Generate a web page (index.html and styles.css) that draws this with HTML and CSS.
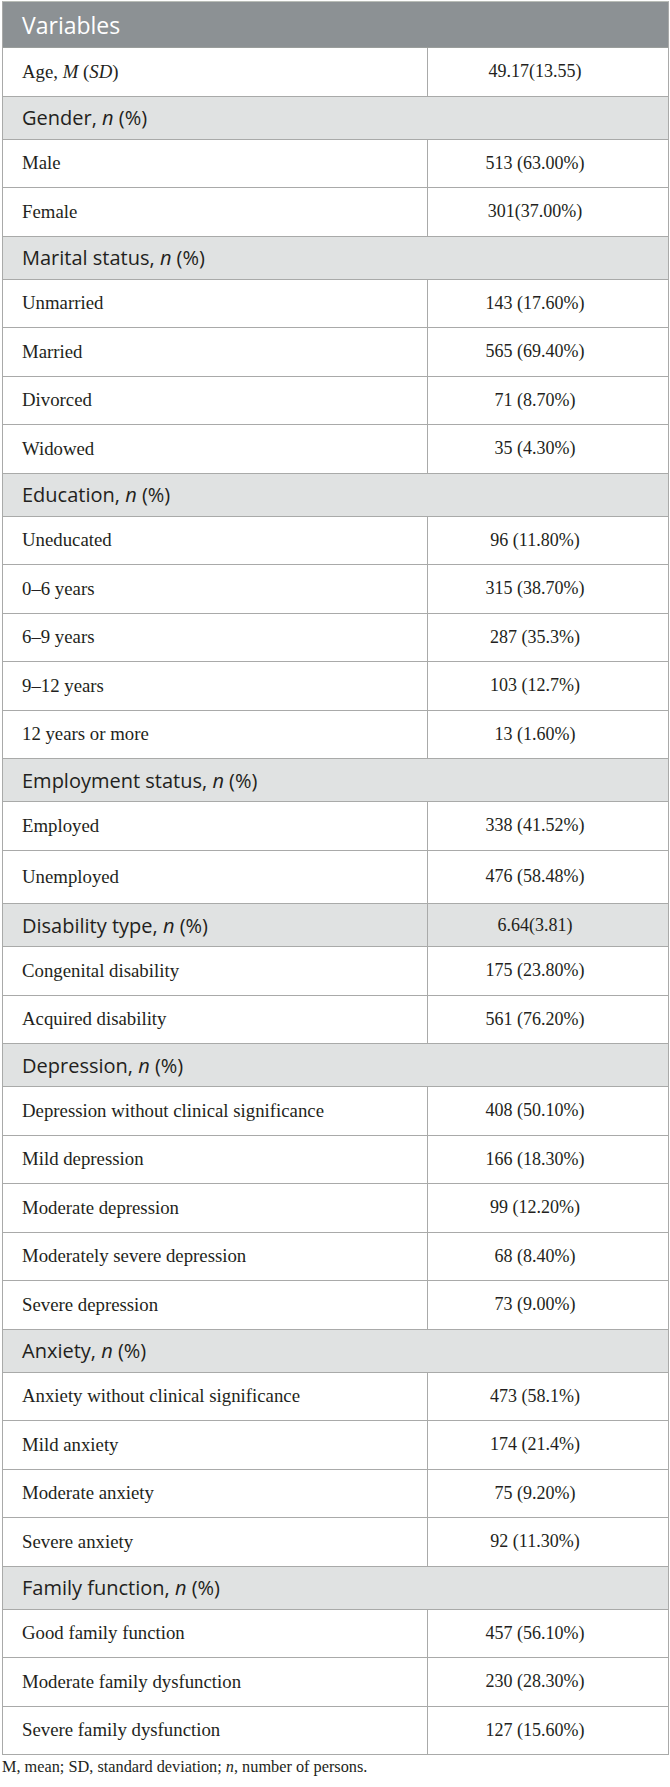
FILE: index.html
```html
<!DOCTYPE html>
<html lang="en">
<head>
<meta charset="utf-8">
<title>Variables</title>
<link rel="stylesheet" href="styles.css">
</head>
<body>
<div class="page">
  <div class="tbl" role="table">
    <div class="head" role="row"><div class="hcell" role="columnheader"><span>Variables</span></div></div>
    <div class="row" role="row"><div class="lab" role="cell"><span>Age, <i>M</i> (<i>SD</i>)</span></div><div class="val" role="cell"><span>49.17(13.55)</span></div></div>
    <div class="sec" role="row"><div class="slab" role="cell"><span>Gender, <i>n</i> (%)</span></div></div>
    <div class="row" role="row"><div class="lab" role="cell"><span>Male</span></div><div class="val" role="cell"><span>513 (63.00%)</span></div></div>
    <div class="row" role="row"><div class="lab" role="cell"><span>Female</span></div><div class="val" role="cell"><span>301(37.00%)</span></div></div>
    <div class="sec" role="row"><div class="slab" role="cell"><span>Marital status, <i>n</i> (%)</span></div></div>
    <div class="row" role="row"><div class="lab" role="cell"><span>Unmarried</span></div><div class="val" role="cell"><span>143 (17.60%)</span></div></div>
    <div class="row" role="row"><div class="lab" role="cell"><span>Married</span></div><div class="val" role="cell"><span>565 (69.40%)</span></div></div>
    <div class="row" role="row"><div class="lab" role="cell"><span>Divorced</span></div><div class="val" role="cell"><span>71 (8.70%)</span></div></div>
    <div class="row" role="row"><div class="lab" role="cell"><span>Widowed</span></div><div class="val" role="cell"><span>35 (4.30%)</span></div></div>
    <div class="sec" role="row"><div class="slab" role="cell"><span>Education, <i>n</i> (%)</span></div></div>
    <div class="row" role="row"><div class="lab" role="cell"><span>Uneducated</span></div><div class="val" role="cell"><span>96 (11.80%)</span></div></div>
    <div class="row" role="row"><div class="lab" role="cell"><span>0–6 years</span></div><div class="val" role="cell"><span>315 (38.70%)</span></div></div>
    <div class="row" role="row"><div class="lab" role="cell"><span>6–9 years</span></div><div class="val" role="cell"><span>287 (35.3%)</span></div></div>
    <div class="row" role="row"><div class="lab" role="cell"><span>9–12 years</span></div><div class="val" role="cell"><span>103 (12.7%)</span></div></div>
    <div class="row" role="row"><div class="lab" role="cell"><span>12 years or more</span></div><div class="val" role="cell"><span>13 (1.60%)</span></div></div>
    <div class="sec" role="row"><div class="slab" role="cell"><span>Employment status, <i>n</i> (%)</span></div></div>
    <div class="row" role="row"><div class="lab" role="cell"><span>Employed</span></div><div class="val" role="cell"><span>338 (41.52%)</span></div></div>
    <div class="row tall" role="row"><div class="lab" role="cell"><span>Unemployed</span></div><div class="val" role="cell"><span>476 (58.48%)</span></div></div>
    <div class="sec split" role="row"><div class="slab" role="cell"><span>Disability type, <i>n</i> (%)</span></div><div class="val" role="cell"><span>6.64(3.81)</span></div></div>
    <div class="row" role="row"><div class="lab" role="cell"><span>Congenital disability</span></div><div class="val" role="cell"><span>175 (23.80%)</span></div></div>
    <div class="row" role="row"><div class="lab" role="cell"><span>Acquired disability</span></div><div class="val" role="cell"><span>561 (76.20%)</span></div></div>
    <div class="sec" role="row"><div class="slab" role="cell"><span>Depression, <i>n</i> (%)</span></div></div>
    <div class="row" role="row"><div class="lab" role="cell"><span>Depression without clinical significance</span></div><div class="val" role="cell"><span>408 (50.10%)</span></div></div>
    <div class="row" role="row"><div class="lab" role="cell"><span>Mild depression</span></div><div class="val" role="cell"><span>166 (18.30%)</span></div></div>
    <div class="row" role="row"><div class="lab" role="cell"><span>Moderate depression</span></div><div class="val" role="cell"><span>99 (12.20%)</span></div></div>
    <div class="row" role="row"><div class="lab" role="cell"><span>Moderately severe depression</span></div><div class="val" role="cell"><span>68 (8.40%)</span></div></div>
    <div class="row" role="row"><div class="lab" role="cell"><span>Severe depression</span></div><div class="val" role="cell"><span>73 (9.00%)</span></div></div>
    <div class="sec" role="row"><div class="slab" role="cell"><span>Anxiety, <i>n</i> (%)</span></div></div>
    <div class="row" role="row"><div class="lab" role="cell"><span>Anxiety without clinical significance</span></div><div class="val" role="cell"><span>473 (58.1%)</span></div></div>
    <div class="row" role="row"><div class="lab" role="cell"><span>Mild anxiety</span></div><div class="val" role="cell"><span>174 (21.4%)</span></div></div>
    <div class="row" role="row"><div class="lab" role="cell"><span>Moderate anxiety</span></div><div class="val" role="cell"><span>75 (9.20%)</span></div></div>
    <div class="row" role="row"><div class="lab" role="cell"><span>Severe anxiety</span></div><div class="val" role="cell"><span>92 (11.30%)</span></div></div>
    <div class="sec" role="row"><div class="slab" role="cell"><span>Family function, <i>n</i> (%)</span></div></div>
    <div class="row" role="row"><div class="lab" role="cell"><span>Good family function</span></div><div class="val" role="cell"><span>457 (56.10%)</span></div></div>
    <div class="row" role="row"><div class="lab" role="cell"><span>Moderate family dysfunction</span></div><div class="val" role="cell"><span>230 (28.30%)</span></div></div>
    <div class="row" role="row"><div class="lab" role="cell"><span>Severe family dysfunction</span></div><div class="val" role="cell"><span>127 (15.60%)</span></div></div>
  </div>
  <p class="note">M, mean; SD, standard deviation; <i>n</i>, number of persons.</p>
</div>
</body>
</html>
```

FILE: styles.css
```css
html, body {
  margin: 0;
  padding: 0;
  background: #ffffff;
}

.page {
  padding: 1px 0 0 2px;
  width: 667px;
}

.tbl {
  width: 667px;
  box-sizing: border-box;
  border-left: 1px solid #a9aaa9;
  border-right: 1px solid #a9aaa9;
  border-top: 1px solid #b9bdb7;
}

.head,
.row,
.sec {
  box-sizing: border-box;
  display: grid;
  grid-template-columns: 424px 1fr;
  align-items: stretch;
  border-bottom: 1px solid #a9aaa9;
}

.head {
  height: 46px;
  background: #8c9194;
  border-bottom-color: #9a9e9c;
  grid-template-columns: 1fr;
}

.row {
  height: 48.5px;
}

.row.tall {
  height: 53.5px;
}

.sec {
  height: 43px;
  background: #e0e2e2;
  grid-template-columns: 1fr;
}

.sec.split {
  grid-template-columns: 424px 1fr;
}

.hcell,
.lab,
.slab,
.val {
  display: flex;
  align-items: center;
  padding-left: 19px;
  white-space: nowrap;
}

.hcell {
  color: #ffffff;
  font-family: "Open Sans", "Noto Sans", sans-serif;
  font-weight: 400;
  font-size: 23px;
}

.lab {
  font-family: "Liberation Serif", "Times New Roman", serif;
  font-size: 18.8px;
  color: #231f20;
}

.slab {
  font-family: "Open Sans", "Noto Sans", sans-serif;
  font-size: 20px;
  color: #231f20;
}

.val {
  justify-content: center;
  padding: 0 26px 0 0;
  border-left: 1px solid #a9aaa9;
  font-family: "Liberation Serif", "Times New Roman", serif;
  font-size: 18px;
  color: #231f20;
}

.note {
  margin: 3px 0 0 0;
  font-family: "Liberation Serif", "Times New Roman", serif;
  font-size: 16.3px;
  line-height: 18px;
  color: #231f20;
}
```
